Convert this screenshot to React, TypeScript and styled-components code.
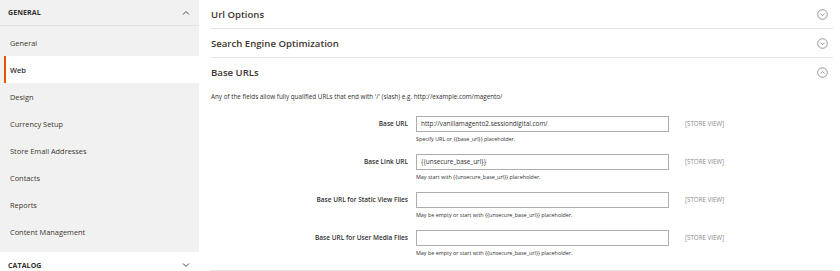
import styled, { createGlobalStyle } from "styled-components"

const Global = createGlobalStyle`
  html, body {
    margin: 0;
    padding: 0;
    background: #fff;
    font-family: "Open Sans", "Liberation Sans", sans-serif;
    color: #303030;
  }
`

const navItems = [
  "General",
  "Web",
  "Design",
  "Currency Setup",
  "Store Email Addresses",
  "Contacts",
  "Reports",
  "Content Management",
]

const fields = [
  { label: "Base URL", value: "http://vanillamagento2.sessiondigital.com/", note: "Specify URL or {{base_url}} placeholder." },
  { label: "Base Link URL", value: "{{unsecure_base_url}}", note: "May start with {{unsecure_base_url}} placeholder." },
  { label: "Base URL for Static View Files", value: "", note: "May be empty or start with {{unsecure_base_url}} placeholder." },
  { label: "Base URL for User Media Files", value: "", note: "May be empty or start with {{unsecure_base_url}} placeholder." },
]

const Chevron = ({ up }: { up?: boolean }) => (
  <svg width="8" height="6" viewBox="0 0 8 6">
    <path d={up ? "M1 4.5 L4 1.5 L7 4.5" : "M1 1.5 L4 4.5 L7 1.5"} fill="none" stroke="#514943" strokeWidth="1" />
  </svg>
)

const CircleChevron = ({ up }: { up?: boolean }) => (
  <svg width="11" height="11" viewBox="0 0 11 11">
    <circle cx="5.5" cy="5.5" r="4.8" fill="none" stroke="#8a8a8a" strokeWidth="0.9" />
    <path d={up ? "M3.4 6.5 L5.5 4.4 L7.6 6.5" : "M3.4 4.6 L5.5 6.7 L7.6 4.6"} fill="none" stroke="#8a8a8a" strokeWidth="0.9" />
  </svg>
)

export default function App() {
  return (
    <>
      <Global />
      <Page>
        <Sidebar>
          <GroupHeader>
            GENERAL
            <Chevron up />
          </GroupHeader>
          <NavList>
            {navItems.map((n) => (
              <NavItem key={n} $active={n === "Web"}>{n}</NavItem>
            ))}
          </NavList>
          <GroupHeader $white>
            CATALOG
            <Chevron />
          </GroupHeader>
        </Sidebar>
        <Main>
          <SectionHeader>
            Url Options
            <CircleChevron />
          </SectionHeader>
          <SectionHeader>
            Search Engine Optimization
            <CircleChevron />
          </SectionHeader>
          <SectionHeader $open>
            Base URLs
            <CircleChevron up />
          </SectionHeader>
          <Description>
            Any of the fields allow fully qualified URLs that end with '/' (slash) e.g. http://example.com/magento/
          </Description>
          <Form>
            {fields.map((f) => (
              <FieldRow key={f.label}>
                <Label>{f.label}</Label>
                <Control>
                  <Input>{f.value}</Input>
                  <Note>{f.note}</Note>
                </Control>
                <Scope>[STORE VIEW]</Scope>
              </FieldRow>
            ))}
          </Form>
        </Main>
      </Page>
    </>
  )
}

const Page = styled.div`
  display: flex;
  width: 840px;
  height: 271px;
  overflow: hidden;
`

const Sidebar = styled.div`
  width: 199px;
  flex-shrink: 0;
  background: #f1f1f1;
  display: flex;
  flex-direction: column;
`

const GroupHeader = styled.div<{ $white?: boolean }>`
  height: 26px;
  box-sizing: border-box;
  display: flex;
  align-items: center;
  justify-content: space-between;
  padding: 0 9px 0 8px;
  font-size: 7px;
  font-weight: 700;
  letter-spacing: 0.1px;
  color: #303030;
  background: ${(p) => (p.$white ? "#fff" : "#f1f1f1")};
  border-bottom: ${(p) => (p.$white ? "none" : "1px solid #e3e3e3")};
  margin-top: ${(p) => (p.$white ? "7px" : "0")};
  flex-shrink: 0;
`

const NavList = styled.div`
  display: flex;
  flex-direction: column;
  padding-top: 3px;
`

const NavItem = styled.div<{ $active?: boolean }>`
  height: 27px;
  box-sizing: border-box;
  display: flex;
  align-items: center;
  font-size: 7.4px;
  color: ${(p) => (p.$active ? "#303030" : "#41362f")};
  font-weight: ${(p) => (p.$active ? 600 : 400)};
  background: ${(p) => (p.$active ? "#fff" : "transparent")};
  border-left: ${(p) => (p.$active ? "2px solid #eb5202" : "none")};
  margin-left: ${(p) => (p.$active ? "4px" : "0")};
  padding-left: ${(p) => (p.$active ? "4px" : "10px")};
`

const Main = styled.div`
  flex: 1;
  padding: 0 7px 0 12px;
  display: flex;
  flex-direction: column;
`

const SectionHeader = styled.div<{ $open?: boolean }>`
  height: 29px;
  box-sizing: border-box;
  display: flex;
  align-items: center;
  justify-content: space-between;
  padding-right: 5px;
  font-size: 9.6px;
  font-weight: 600;
  color: #41362f;
  border-bottom: ${(p) => (p.$open ? "none" : "1px solid #e3e3e3")};
`

const Description = styled.div`
  font-size: 6.3px;
  color: #303030;
  margin-top: 5px;
`

const Form = styled.div`
  display: flex;
  flex-direction: column;
  gap: 11px;
  padding-top: 15px;
  border-bottom: 1px solid #e3e3e3;
  padding-bottom: 13px;
`

const FieldRow = styled.div`
  display: grid;
  grid-template-columns: 197px 253px auto;
  column-gap: 8px;
  align-items: start;
`

const Label = styled.div`
  text-align: right;
  font-size: 6.5px;
  font-weight: 600;
  color: #303030;
  line-height: 16px;
`

const Control = styled.div`
  display: flex;
  flex-direction: column;
`

const Input = styled.div`
  height: 16px;
  box-sizing: border-box;
  border: 1px solid #adadad;
  padding: 0 4px;
  font-size: 6.4px;
  line-height: 14px;
  color: #303030;
  background: #fff;
`

const Note = styled.div`
  font-size: 5.4px;
  color: #303030;
  margin-top: 3px;
  line-height: 8px;
`

const Scope = styled.div`
  font-size: 6.2px;
  color: #8a8a8a;
  line-height: 16px;
  margin-left: 8px;
`
